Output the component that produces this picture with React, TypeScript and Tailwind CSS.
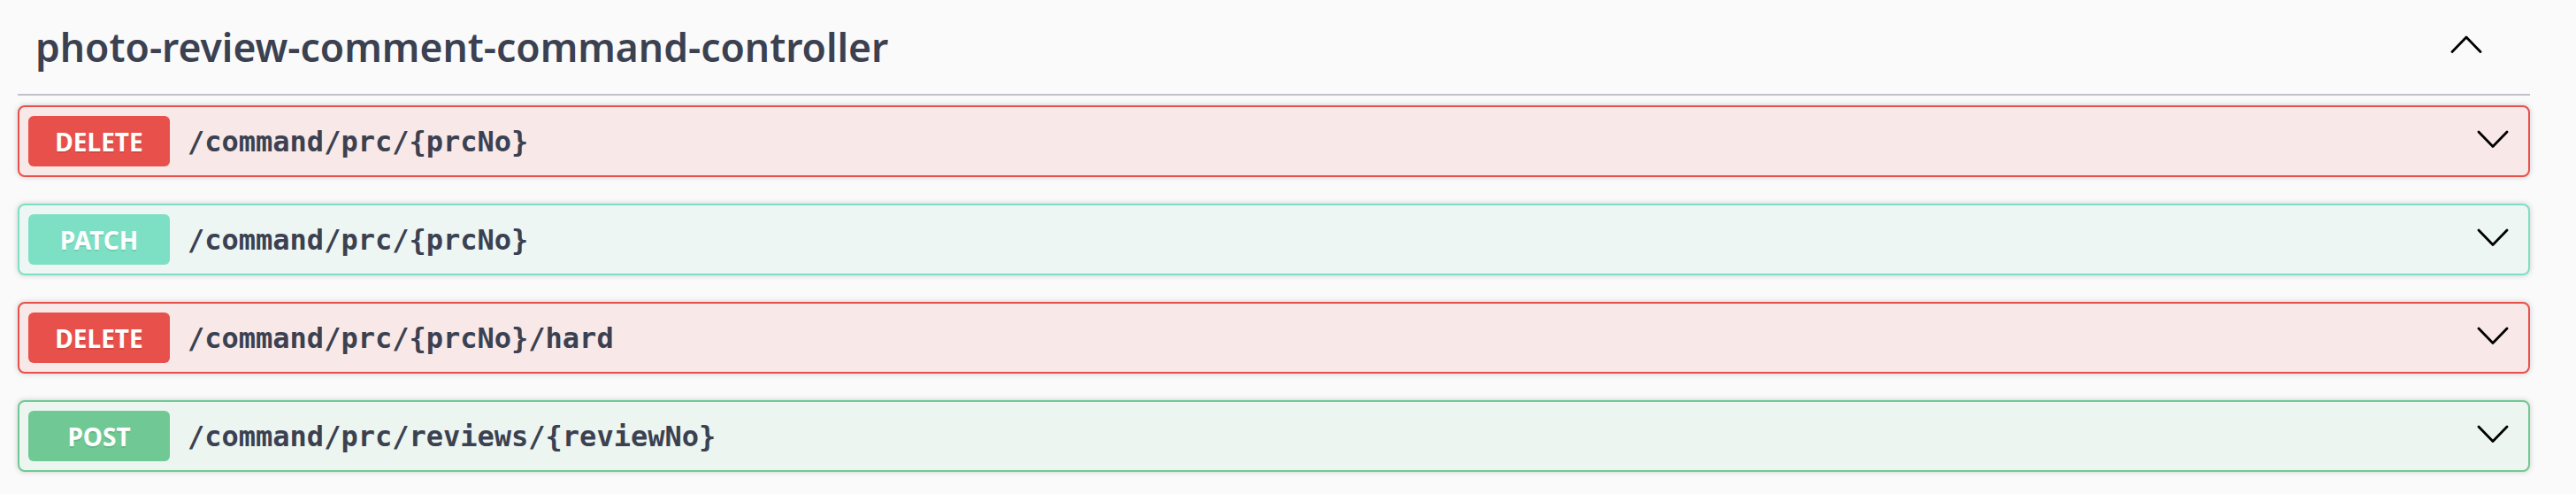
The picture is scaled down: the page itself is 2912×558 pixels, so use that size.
import React from 'react';

type Method = 'DELETE' | 'PATCH' | 'POST';

const ENDPOINTS: { method: Method; path: string }[] = [
  { method: 'DELETE', path: '/command/prc/{prcNo}' },
  { method: 'PATCH', path: '/command/prc/{prcNo}' },
  { method: 'DELETE', path: '/command/prc/{prcNo}/hard' },
  { method: 'POST', path: '/command/prc/reviews/{reviewNo}' },
];

const BLOCK: Record<Method, string> = {
  DELETE: 'border-[#e8504b] bg-[#f8e8e7]',
  PATCH: 'border-[#7de0c4] bg-[#edf6f3]',
  POST: 'border-[#70c994] bg-[#ecf5f0]',
};

const BADGE: Record<Method, string> = {
  DELETE: 'bg-[#e8504b]',
  PATCH: 'bg-[#7de0c4]',
  POST: 'bg-[#70c994]',
};

function Chevron({ up = false }: { up?: boolean }) {
  return (
    <svg width="36" height="20" viewBox="0 0 36 20" fill="none" aria-hidden>
      <polyline
        points={up ? '2,18.5 18,2 34,18.5' : '2,2 18,18.5 34,2'}
        stroke="#000"
        strokeWidth="2.8"
        strokeLinecap="round"
        strokeLinejoin="round"
      />
    </svg>
  );
}

function OpBlock({ method, path }: { method: Method; path: string }) {
  return (
    <div
      className={`mb-[30px] flex h-[81px] items-center rounded-[8px] border-2 px-[10px] shadow-[0_0_6px_rgba(0,0,0,0.19)] last:mb-0 ${BLOCK[method]}`}
    >
      <span
        className={`flex h-[57px] w-[160px] shrink-0 items-center justify-center rounded-[6px] text-[28px] font-bold leading-none text-white [text-shadow:0_2px_0_rgba(0,0,0,0.1)] ${BADGE[method]}`}
        style={{ fontFamily: '"Noto Sans", "Open Sans", sans-serif' }}
      >
        {method}
      </span>
      <span
        className="flex-1 px-[20px] text-[32px] font-bold leading-none text-[#3b4151]"
        style={{ fontFamily: '"DejaVu Sans Mono", "Liberation Mono", monospace' }}
      >
        {path}
      </span>
      <span className="mr-[12px] -mt-[6px] flex">
        <Chevron />
      </span>
    </div>
  );
}

export default function App() {
  return (
    <div className="h-[558px] w-full overflow-hidden bg-[#fafafa]">
      <div className="ml-[20px] w-[2840px]">
        <div className="mb-[11px] flex h-[108px] items-center border-b-2 border-[#c1c2c7] pl-[20px] pr-[54px]">
          <h3
            className="flex-1 text-[44.4px] font-semibold leading-none text-[#3b4151]"
            style={{ fontFamily: '"Noto Sans", "Open Sans", sans-serif' }}
          >
            photo-review-comment-command-controller
          </h3>
          <span className="-mt-[6px] flex">
            <Chevron up />
          </span>
        </div>
        {ENDPOINTS.map((e, i) => (
          <OpBlock key={i} method={e.method} path={e.path} />
        ))}
      </div>
    </div>
  );
}
